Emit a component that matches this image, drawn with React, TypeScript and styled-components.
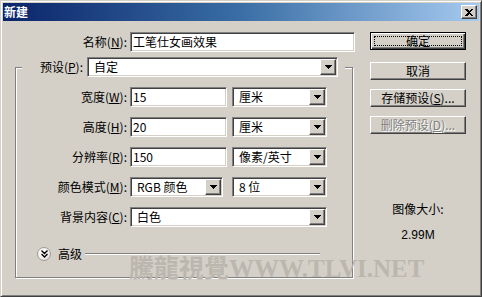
import React from "react";
import styled, { createGlobalStyle, css } from "styled-components";

const face = "#d4d0c8";

const GlobalStyle = createGlobalStyle`
  html, body {
    margin: 0;
    padding: 0;
    background: ${face};
  }
  body {
    font-family: "Noto Sans CJK SC", "Liberation Sans", sans-serif;
    font-size: 12px;
    color: #000;
  }
`;

const sunken = css`
  box-sizing: border-box;
  border: 1px solid;
  border-color: #808080 #fff #fff #808080;
  box-shadow: inset 1px 1px 0 #404040, inset -1px -1px 0 ${face};
  background: #fff;
`;

const raised = css`
  box-sizing: border-box;
  background: ${face};
  border: 1px solid;
  border-color: #fff #404040 #404040 #fff;
  box-shadow: inset -1px -1px 0 #808080;
`;

const Window = styled.div`
  position: relative;
  width: 482px;
  height: 297px;
  box-sizing: border-box;
  background: ${face};
  border: 1px solid;
  border-color: ${face} #404040 #404040 ${face};
  box-shadow: inset 1px 1px 0 #fff, inset -1px -1px 0 #808080;
  padding: 2px;
  overflow: hidden;
`;

const TitleBar = styled.div`
  height: 18px;
  display: flex;
  align-items: center;
  justify-content: space-between;
  padding: 0 2px 0 1px;
  background: linear-gradient(to right, #0a246a 0%, #3a6ea5 50%, #a6caf0 100%);
  color: #fff;
  font-weight: bold;
  font-size: 12px;
  line-height: 18px;
`;

const CloseButton = styled.div`
  ${raised};
  width: 16px;
  height: 14px;
  display: flex;
  align-items: center;
  justify-content: center;
`;

const Body = styled.div`
  display: grid;
  grid-template-columns: 367px 96px;
`;

const LeftPane = styled.div`
  padding-top: 11px;
`;

const Row = styled.div`
  display: flex;
  align-items: center;
  height: 20px;
`;

const Label = styled.label<{ $w: number }>`
  width: ${(p) => p.$w}px;
  flex-shrink: 0;
  text-align: right;
  white-space: nowrap;
  margin-right: 3px;
  line-height: 20px;
`;

const TextBox = styled.div<{ $w: number }>`
  ${sunken};
  width: ${(p) => p.$w}px;
  height: 20px;
  padding-left: 2px;
  line-height: 18px;
  white-space: nowrap;
`;

const Select = styled.div<{ $w: number; $gap?: number }>`
  ${sunken};
  width: ${(p) => p.$w}px;
  height: 20px;
  padding: 1px;
  display: flex;
  align-items: center;
  margin-left: ${(p) => p.$gap ?? 0}px;
`;

const SelectText = styled.span`
  flex: 1;
  padding-left: 5px;
  white-space: nowrap;
  line-height: 16px;
`;

const DropButton = styled.span`
  ${raised};
  width: 16px;
  height: 16px;
  display: flex;
  align-items: center;
  justify-content: center;
`;

const Group = styled.fieldset`
  margin: 5px 0 0 12px;
  width: 338px;
  box-sizing: border-box;
  border: 1px solid #808080;
  box-shadow: 1px 1px 0 #fff, inset 1px 1px 0 #fff;
  padding: 10px 0 16px 0;
  min-inline-size: auto;
`;

const Legend = styled.legend`
  margin-left: 6px;
  padding: 0 7px 0 13px;
  background: ${face};
  display: flex;
  align-items: center;
  height: 20px;
`;

const Rows = styled.div`
  display: flex;
  flex-direction: column;
  gap: 10px;
`;

const Advanced = styled.div`
  display: flex;
  align-items: center;
  height: 14px;
  margin: 20px 0 0 21px;
`;

const Disclosure = styled.span`
  width: 14px;
  height: 14px;
  box-sizing: border-box;
  border-radius: 50%;
  border: 1px solid #a09c94;
  background: radial-gradient(circle at 40% 35%, #ffffff 0%, #f2f0ec 55%, #cfcbc3 100%);
  display: flex;
  align-items: center;
  justify-content: center;
  margin-right: 7px;
`;

const AdvancedText = styled.span`
  line-height: 14px;
  margin-right: 3px;
`;

const Etched = styled.span`
  width: 235px;
  height: 0;
  border-top: 1px solid #808080;
  border-bottom: 1px solid #fff;
`;

const RightPane = styled.div`
  padding-top: 11px;
  display: flex;
  flex-direction: column;
`;

const Button = styled.div<{ $gap?: number; $disabled?: boolean }>`
  ${raised};
  height: 18px;
  margin-top: ${(p) => p.$gap ?? 0}px;
  display: flex;
  align-items: center;
  justify-content: center;
  line-height: 16px;
  color: ${(p) => (p.$disabled ? "#808080" : "#000")};
  text-shadow: ${(p) => (p.$disabled ? "1px 1px 0 #fff" : "none")};
`;

const DefaultButton = styled.div`
  position: relative;
  box-sizing: border-box;
  height: 18px;
  background: ${face};
  border: 1px solid #000;
  box-shadow: inset 1px 1px 0 #fff, inset -1px -1px 0 #404040, inset -2px -2px 0 #808080;
  display: flex;
  align-items: center;
  justify-content: center;
  line-height: 16px;

  &::after {
    content: "";
    position: absolute;
    inset: 3px;
    border: 1px dotted #000;
  }
`;

const SizeInfo = styled.div`
  margin-top: 68px;
  text-align: center;
  line-height: 14px;
`;

const SizeValue = styled.div`
  margin-top: 12px;
  text-align: center;
  line-height: 14px;
  font-family: "Liberation Sans", sans-serif;
`;

const Watermark = styled.div`
  position: absolute;
  left: 128px;
  top: 254px;
  font-family: "Liberation Serif", "Noto Sans CJK TC", serif;
  font-weight: bold;
  font-size: 25px;
  line-height: 28px;
  color: #bbb7af;
  white-space: nowrap;
  pointer-events: none;
`;

const Arrow = () => (
  <svg width="7" height="4" viewBox="0 0 7 4" shapeRendering="crispEdges">
    <path d="M0 0h7L3.5 4z" fill="#000" />
  </svg>
);

const DropDown = ({ w, text, gap }: { w: number; text: string; gap?: number }) => (
  <Select $w={w} $gap={gap}>
    <SelectText>{text}</SelectText>
    <DropButton>
      <Arrow />
    </DropButton>
  </Select>
);

export default function App() {
  return (
    <>
      <GlobalStyle />
      <Window>
        <TitleBar>
          <span>新建</span>
          <CloseButton>
            <svg width="8" height="7" viewBox="0 0 8 7" shapeRendering="crispEdges">
              <path d="M0 0h2l2 2 2-2h2L5 3.5 8 7H6L4 5 2 7H0l3-3.5z" fill="#000" />
            </svg>
          </CloseButton>
        </TitleBar>
        <Body>
          <LeftPane>
            <Row>
              <Label $w={124}>
                名称(<u>N</u>):
              </Label>
              <TextBox $w={225}>工笔仕女画效果</TextBox>
            </Row>
            <Group>
              <Legend>
                <Label $w={48}>
                  预设(<u>P</u>):
                </Label>
                <DropDown w={251} text="自定" gap={1} />
              </Legend>
              <Rows>
                <Row>
                  <Label $w={111}>
                    宽度(<u>W</u>):
                  </Label>
                  <TextBox $w={97}>15</TextBox>
                  <DropDown w={95} text="厘米" gap={5} />
                </Row>
                <Row>
                  <Label $w={111}>
                    高度(<u>H</u>):
                  </Label>
                  <TextBox $w={97}>20</TextBox>
                  <DropDown w={95} text="厘米" gap={5} />
                </Row>
                <Row>
                  <Label $w={111}>
                    分辨率(<u>R</u>):
                  </Label>
                  <TextBox $w={97}>150</TextBox>
                  <DropDown w={95} text="像素/英寸" gap={5} />
                </Row>
                <Row>
                  <Label $w={111}>
                    颜色模式(<u>M</u>):
                  </Label>
                  <DropDown w={93} text="RGB 颜色" />
                  <DropDown w={95} text="8 位" gap={9} />
                </Row>
                <Row>
                  <Label $w={111}>
                    背景内容(<u>C</u>):
                  </Label>
                  <DropDown w={197} text="白色" />
                </Row>
              </Rows>
              <Advanced>
                <Disclosure>
                  <svg width="7" height="8" viewBox="0 0 7 8">
                    <path d="M0.5 0.5L3.5 3.5 6.5 0.5M0.5 4L3.5 7 6.5 4" fill="none" stroke="#000" strokeWidth="1.4" />
                  </svg>
                </Disclosure>
                <AdvancedText>高级</AdvancedText>
                <Etched />
              </Advanced>
            </Group>
          </LeftPane>
          <RightPane>
            <DefaultButton>确定</DefaultButton>
            <Button $gap={12}>取消</Button>
            <Button $gap={9}>
              存储预设(<u>S</u>)...
            </Button>
            <Button $gap={9} $disabled>
              删除预设(<u>D</u>)...
            </Button>
            <SizeInfo>图像大小:</SizeInfo>
            <SizeValue>2.99M</SizeValue>
          </RightPane>
        </Body>
        <Watermark>騰龍視覺WWW.TLVI.NET</Watermark>
      </Window>
    </>
  );
}
